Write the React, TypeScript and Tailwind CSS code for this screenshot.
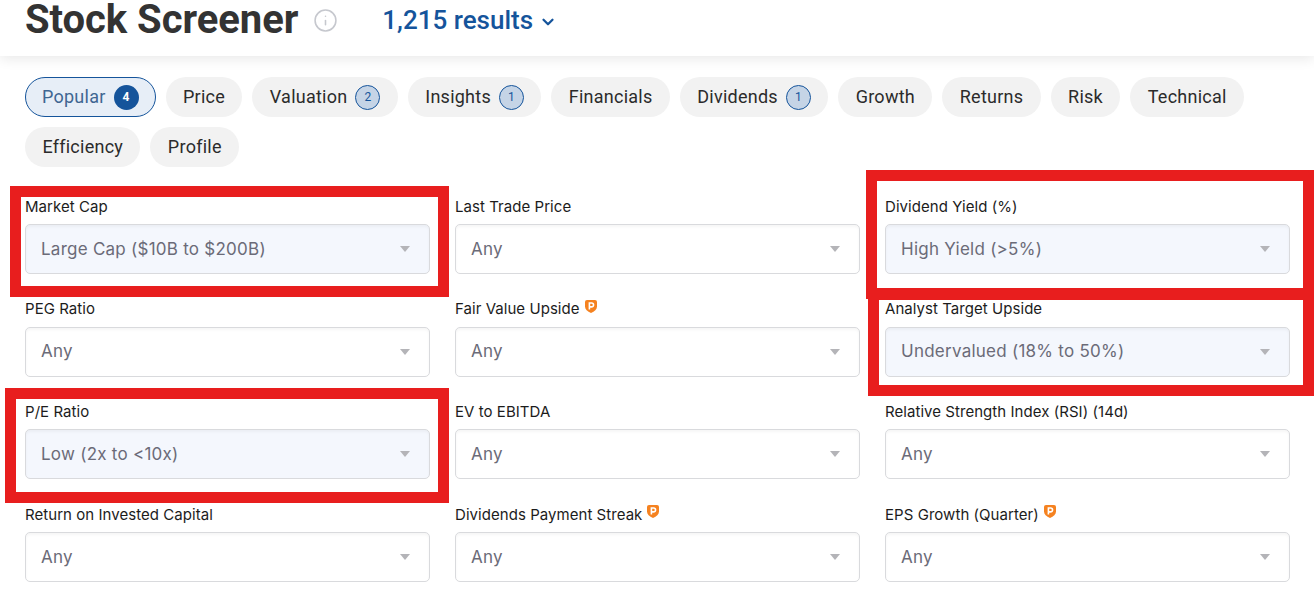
import { ChevronDown, Info } from "lucide-react";

const tabs: { name: string; count?: number; active?: boolean }[] = [
  { name: "Popular", count: 4, active: true },
  { name: "Price" },
  { name: "Valuation", count: 2 },
  { name: "Insights", count: 1 },
  { name: "Financials" },
  { name: "Dividends", count: 1 },
  { name: "Growth" },
  { name: "Returns" },
  { name: "Risk" },
  { name: "Technical" },
  { name: "Efficiency" },
  { name: "Profile" },
];

const filters: { label: string; value?: string; pro?: boolean }[] = [
  { label: "Market Cap", value: "Large Cap ($10B to $200B)" },
  { label: "Last Trade Price" },
  { label: "Dividend Yield (%)", value: "High Yield (>5%)" },
  { label: "PEG Ratio" },
  { label: "Fair Value Upside", pro: true },
  { label: "Analyst Target Upside", value: "Undervalued (18% to 50%)" },
  { label: "P/E Ratio", value: "Low (2x to <10x)" },
  { label: "EV to EBITDA" },
  { label: "Relative Strength Index (RSI) (14d)" },
  { label: "Return on Invested Capital" },
  { label: "Dividends Payment Streak", pro: true },
  { label: "EPS Growth (Quarter)", pro: true },
];

function ProBadge() {
  return (
    <svg width="12" height="13" viewBox="0 0 12 13" className="ml-[5px] -mt-[7px] shrink-0">
      <path d="M2 0h8a2 2 0 0 1 2 2v4.5c0 2.8-2.4 5-6 6.5-3.6-1.5-6-3.7-6-6.5V2a2 2 0 0 1 2-2z" fill="#f58220" />
      <path d="M4.4 9.5V3h2.2a1.9 1.9 0 0 1 0 3.9H4.4" fill="none" stroke="#fff" strokeWidth="1.6" />
    </svg>
  );
}

function Filter({ label, value, pro }: { label: string; value?: string; pro?: boolean }) {
  return (
    <div>
      <div className="mb-[7px] flex h-5 items-center font-['Inter',sans-serif] text-[15px] tracking-[0.05px] text-[#1c1c1c]">
        {label}
        {pro && <ProBadge />}
      </div>
      <div
        className={`flex h-[50px] items-center justify-between rounded-[5px] border border-[#d9dadd] pl-[15px] pr-[19px] font-['Inter',sans-serif] text-[17px] text-[#6b6b78] shadow-[inset_0_2px_3px_rgba(0,0,0,0.04)] ${
          value ? "bg-[#f4f7fd]" : "bg-white"
        }`}
      >
        <span className="pt-[1px] tracking-[0.25px]">{value ?? "Any"}</span>
        <svg width="10" height="6" viewBox="0 0 10 6">
          <path d="M0 0h10L5 6z" fill="#b4b4b8" />
        </svg>
      </div>
    </div>
  );
}

export default function App() {
  return (
    <div className="relative h-[598px] overflow-hidden bg-white font-['Roboto',sans-serif]">
      <header className="relative flex h-14 items-center pb-[17px] pl-[25px] shadow-[0_3px_12px_rgba(0,0,0,0.09)]">
        <h1 className="text-[40px] font-bold leading-[38px] tracking-[-0.05px] text-[#333333]">Stock Screener</h1>
        <Info className="ml-[15px] mt-[2px] h-[25px] w-[25px] text-[#c6c8ce]" strokeWidth={1.5} />
        <div className="ml-[44px] mt-[2px] flex items-center text-[26px] font-medium text-[#15549b]">
          1,215 results
          <ChevronDown className="ml-[6px] mt-[2px] h-[18px] w-[18px]" strokeWidth={3} />
        </div>
      </header>

      <nav className="flex flex-wrap gap-[10px] px-[25px] pt-[21px]">
        {tabs.map((t) => (
          <div
            key={t.name}
            className={`flex h-10 items-center rounded-full text-[18px] tracking-[0.25px] ${
              t.active
                ? "border border-[#15549b] bg-[#e7eef7] px-[16px] text-[#3f6692]"
                : "bg-[#f2f2f2] px-[17.4px] text-[#2b2b2b]"
            }`}
          >
            <span className="-mt-[2px]">{t.name}</span>
            {t.count && (
              <span
                className={`ml-2 flex h-[25px] w-[25px] items-center justify-center rounded-full text-[12px] ${
                  t.active
                    ? "bg-[#15549b] font-bold text-white"
                    : "border border-[#15549b] bg-[#c5d4e6] text-[#15549b]"
                }`}
              >
                {t.count}
              </span>
            )}
          </div>
        ))}
      </nav>

      <div className="grid grid-cols-3 gap-x-[25px] gap-y-[25.6px] pl-[25px] pr-[24px] pt-[30px]">
        {filters.map((f) => (
          <Filter key={f.label} {...f} />
        ))}
      </div>

      {/* red annotation boxes drawn over the screenshot */}
      <div className="absolute left-[10px] top-[186px] h-[111px] w-[439px] border-[11px] border-[#e81e1e]" />
      <div className="absolute left-[866px] top-[170px] h-[129px] w-[448px] border-[11px] border-[#e81e1e]" />
      <div className="absolute left-[868px] top-[299px] h-[97px] w-[446px] border-[11px] border-t-[1px] border-[#e81e1e]" />
      <div className="absolute left-[5px] top-[388px] h-[115px] w-[444px] border-[11px] border-[#e81e1e]" />
    </div>
  );
}
